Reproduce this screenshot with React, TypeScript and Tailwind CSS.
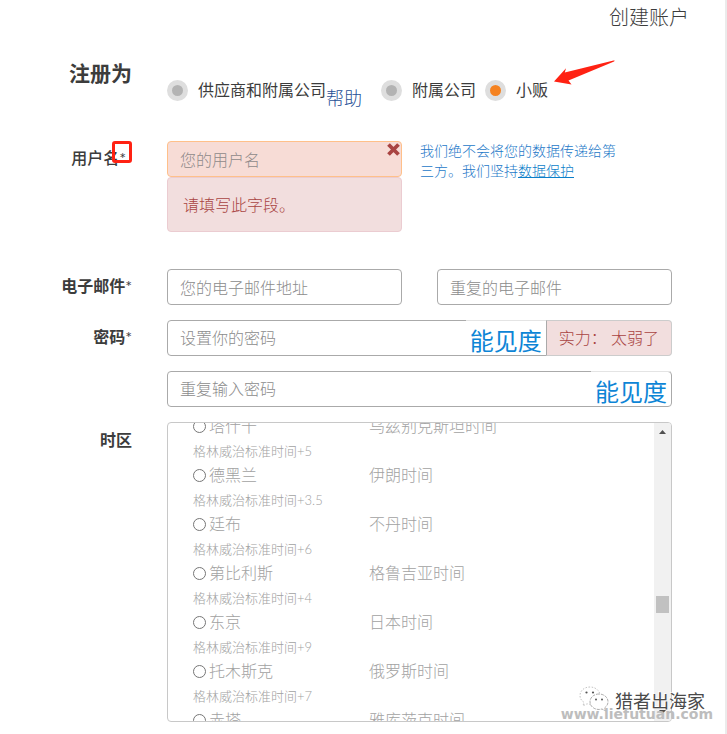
import { useState, type ReactNode } from "react";

const roles = [
  { id: "both", label: "供应商和附属公司", help: true },
  { id: "affiliate", label: "附属公司", help: false },
  { id: "vendor", label: "小贩", help: false },
];

const zones = [
  { city: "塔什干", name: "乌兹别克斯坦时间", offset: "+5" },
  { city: "德黑兰", name: "伊朗时间", offset: "+3.5" },
  { city: "廷布", name: "不丹时间", offset: "+6" },
  { city: "第比利斯", name: "格鲁吉亚时间", offset: "+4" },
  { city: "东京", name: "日本时间", offset: "+9" },
  { city: "托木斯克", name: "俄罗斯时间", offset: "+7" },
  { city: "赤塔", name: "雅库茨克时间", offset: "+9" },
];

const inputClass =
  "h-9 w-full min-w-0 rounded border border-[#aaaaaa] bg-white px-3 text-base font-light text-[#555555] placeholder:text-[#8c8c8c] focus:outline-none";

function Row({ children, className = "" }: { children: ReactNode; className?: string }) {
  return <div className={`grid grid-cols-[132px_minmax(0,1fr)] gap-x-[35px] ${className}`}>{children}</div>;
}

function Label({ htmlFor, className = "font-bold", children }: { htmlFor: string; className?: string; children: ReactNode }) {
  return (
    <label htmlFor={htmlFor} className={`flex h-[34px] items-center justify-end text-base ${className}`}>
      {children}
      <span className="font-normal">*</span>
    </label>
  );
}

function PasswordField({ id, placeholder, className }: { id: string; placeholder: string; className: string }) {
  const [visible, setVisible] = useState(false);

  return (
    <div className={`flex h-9 min-w-0 flex-1 border border-[#aaaaaa] bg-white ${className}`}>
      <input
        id={id}
        type={visible ? "text" : "password"}
        placeholder={placeholder}
        aria-label={placeholder}
        className="min-w-0 flex-1 px-3 text-base font-light text-[#555555] placeholder:text-[#8c8c8c] focus:outline-none"
      />
      <button
        type="button"
        onClick={() => setVisible(!visible)}
        className="-mt-px flex items-center border-t border-[#e4e4e4] pt-1.5 pr-1 pl-1 text-2xl leading-7 text-[#0d85d6]"
      >
        能见度
      </button>
    </div>
  );
}

function TimezoneList() {
  const [zone, setZone] = useState("");

  return (
    <div className="flex h-[300px] overflow-hidden rounded border border-[#c8c8c8]">
      <div className="min-w-0 flex-1 overflow-hidden pl-[25px] text-[#a2a2a2]">
        <ul className="-mt-[9px]">
          {zones.map((z) => (
            <li key={z.city}>
              <label className="grid h-6 grid-cols-[176px_1fr] items-center text-base font-light">
                <span className="flex items-center gap-[3px]">
                  <input
                    type="radio"
                    name="timezone"
                    checked={zone === z.city}
                    onChange={() => setZone(z.city)}
                    className="size-[13px] appearance-none rounded-full border border-[#767676] bg-white checked:border-4"
                  />
                  {z.city}
                </span>
                <span>{z.name}</span>
              </label>
              <div className="h-[25px] text-[13px] leading-[26px] font-light">格林威治标准时间{z.offset}</div>
            </li>
          ))}
        </ul>
      </div>
      <div className="flex w-[17px] flex-col items-center bg-[#f1f1f1] py-[7px]" aria-hidden="true">
        <svg viewBox="0 0 7 4" className="h-1 w-[7px] fill-[#505050]">
          <path d="M3.5 0L7 4H0z" />
        </svg>
        <div className="flex w-full flex-1 flex-col items-center">
          <div className="flex-[10]" />
          <div className="h-[17px] w-[13px] bg-[#c1c1c1]" />
          <div className="flex-[6]" />
        </div>
        <svg viewBox="0 0 7 4" className="h-1 w-[7px] fill-[#505050]">
          <path d="M0 0h7L3.5 4z" />
        </svg>
      </div>
    </div>
  );
}

function Watermark() {
  return (
    <div className="pointer-events-none absolute right-3 bottom-3 flex flex-col items-end">
      <div className="mr-2 flex items-center gap-1.5">
        <svg viewBox="0 0 30 26" className="h-[26px] w-[30px]" fill="#ffffff" stroke="#a8a8a8" strokeWidth="0.7">
          <path
            d="M11 1C5 1 1 5 1 9.500c0 3 1.500 5.300 4 6.800l-1 3.500 4-2 3 .5c6 0 10-4 10-8.600S17 1 11 1z"
            strokeDasharray="1.500 1.500"
          />
          <path
            d="M20 8c-5 0-9 3.400-9 7.800 0 4.300 4 7.700 9 7.700l3-.5 3.500 2-1-3c2-1.500 3.500-3.600 3.500-6.200C29 11.400 25 8 20 8z"
            strokeDasharray="3 1"
            stroke="#888888"
          />
          <g fill="#555555" stroke="none">
            <circle cx="7.500" cy="6.500" r="1.100" />
            <circle cx="14" cy="6.500" r="1.100" />
            <circle cx="17" cy="13.500" r="1" />
            <circle cx="23" cy="13.500" r="1" />
          </g>
        </svg>
        <span className="pt-1 text-lg leading-5 text-[#4a4a4a] [text-shadow:-1px_-1px_0_#ffffff]">猎者出海家</span>
      </div>
      <span className="-mt-1.5 font-['DejaVu_Sans'] text-[14px] leading-4 font-bold text-[#bdbdbd]">
        www.liefutuan.com
      </span>
    </div>
  );
}

export default function App() {
  const [role, setRole] = useState("vendor");

  return (
    <div className="relative min-h-screen border-r-2 border-[#ebebeb] bg-white font-['Lato','Noto_Sans_CJK_SC',sans-serif] text-[#3c3c3c]">
      <header className="flex h-[34px] items-center justify-end pr-9">
        <h1 className="text-xl font-light">创建账户</h1>
      </header>

      <form className="flex flex-col pr-[53px] pb-3" onSubmit={(e) => e.preventDefault()}>
        <Row className="mt-[23px]">
          <h2 className="text-right text-[21px] leading-8 font-bold">注册为</h2>
          <div className="mt-4 flex h-[34px] items-center" role="radiogroup" aria-label="注册为">
            {roles.map((r) => (
              <div key={r.id} className="flex items-center">
                <label className="flex items-center gap-2.5 text-base whitespace-nowrap">
                  <input
                    type="radio"
                    name="role"
                    checked={role === r.id}
                    onChange={() => setRole(r.id)}
                    className="size-[21px] appearance-none rounded-full border-5 border-[#dedede] bg-[#b3b3b3] checked:bg-[#f58220]"
                  />
                  {r.label}
                </label>
                {r.help ? (
                  <a href="#help" className="mt-4 mr-[19px] text-lg font-light whitespace-nowrap text-[#1f4f96]">
                    帮助
                  </a>
                ) : (
                  <span className="w-[9px]" />
                )}
              </div>
            ))}
            <svg viewBox="0 0 61 25" className="-mt-9 -ml-[3px] h-[25px] w-[61px] fill-[#ff2213]" aria-hidden="true">
              <path d="M0 21.500L12 8.200L10.800 12.500L59.500 .5C61 .3 61 1 59.500 1.700L14.500 20.500L17.500 24.500z" />
            </svg>
          </div>
        </Row>

        <Row className="mt-[34px]">
          <div className="relative">
            <Label htmlFor="username" className="pr-1.5 font-medium">
              用户名
            </Label>
            <span className="absolute top-0 right-0 h-[22px] w-5 rounded-[3px] border-3 border-[#ff2213]" />
          </div>
          <div className="grid grid-cols-[235fr_252fr] gap-x-[18px]">
            <div>
              <div className="relative">
                <input
                  id="username"
                  type="text"
                  placeholder="您的用户名"
                  aria-invalid="true"
                  aria-describedby="username-error"
                  className="h-9 w-full rounded border border-[#ffc08a] bg-[#f7dcd6] px-3 text-base font-light placeholder:text-[#8f8a8a] focus:outline-none"
                />
                <svg viewBox="0 0 13 13" className="absolute top-0.5 right-0.5 size-[13px]" aria-hidden="true">
                  <path d="M1.500 1.500l10 10M11.500 1.500l-10 10" stroke="#a94442" strokeWidth="3.800" />
                </svg>
              </div>
              <p
                id="username-error"
                className="flex h-[55px] items-center rounded border border-[#ebccd1] bg-[#f2dede] px-[15px] text-base font-light text-[#a94442]"
              >
                请填写此字段。
              </p>
            </div>
            <p className="max-w-[200px] text-sm leading-5 font-light text-[#2478c8]">
              我们绝不会将您的数据传递给第三方。我们坚持
              <a href="#privacy" className="text-[#0b7ec9] underline">
                数据保护
              </a>
            </p>
          </div>
        </Row>

        <Row className="mt-[37px]">
          <Label htmlFor="email">电子邮件</Label>
          <div className="grid grid-cols-2 gap-x-[35px]">
            <input id="email" type="email" placeholder="您的电子邮件地址" className={inputClass} />
            <input type="email" placeholder="重复的电子邮件" aria-label="重复的电子邮件" className={inputClass} />
          </div>
        </Row>

        <Row className="mt-[15px]">
          <Label htmlFor="password">密码</Label>
          <div className="flex flex-col gap-[15px]">
            <div className="flex">
              <PasswordField id="password" placeholder="设置你的密码" className="rounded-l" />
              <div className="flex items-center rounded-r border border-l-0 border-[#cccccc] bg-[#f2dede] px-3 text-base font-light whitespace-nowrap text-[#a94442]">
                实力： 太弱了
              </div>
            </div>
            <div className="flex">
              <PasswordField id="password-repeat" placeholder="重复输入密码" className="rounded" />
            </div>
          </div>
        </Row>

        <Row className="mt-[15px]">
          <div className="flex h-9 items-center justify-end text-base font-bold">时区</div>
          <TimezoneList />
        </Row>
      </form>

      <Watermark />
    </div>
  );
}
